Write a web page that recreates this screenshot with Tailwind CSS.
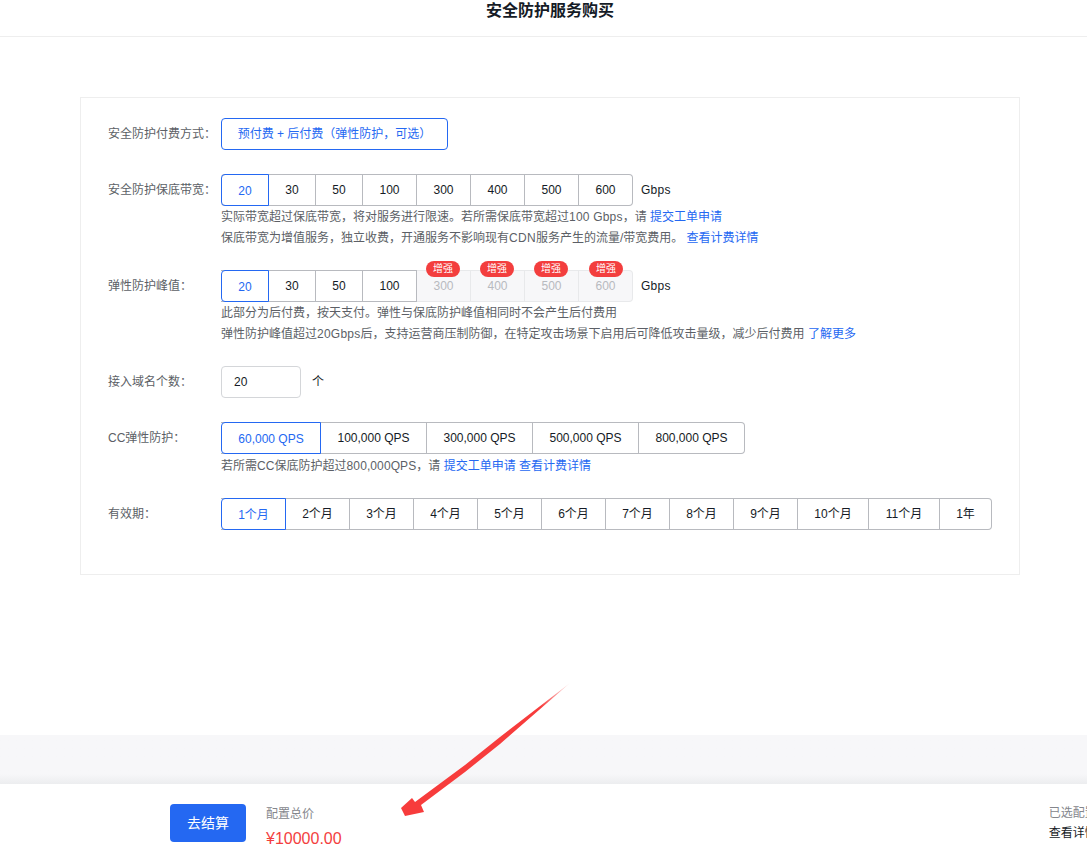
<!DOCTYPE html>
<html lang="zh">
<head>
<meta charset="utf-8">
<script src="https://cdn.jsdelivr.net/npm/@tailwindcss/browser@4"></script>
</head>
<body class="bg-white">
<div class="relative w-[1087px] h-[851px] overflow-hidden font-['Liberation_Sans','Noto_Sans_CJK_SC',sans-serif] text-xs text-[#151b26]">
  <div class="w-[1100px] h-[851px] flex flex-col">
    <header class="h-[37px] shrink-0 border-b border-[#eeeeee] text-center text-base font-bold leading-[22px]">安全防护服务购买</header>
    <main class="flex-1 pt-[60px]">
      <section class="w-[940px] mx-auto border border-[#eeeeee] pt-5 pb-[44px] pl-[27px]">
        <div class="flex mb-6">
          <div class="w-[113px] leading-[32px] text-[#5c5f66]">安全防护付费方式：</div>
          <div class="h-8 w-[227px] flex items-center justify-center rounded-[4px] border border-[#2468f2] text-[#2468f2]">预付费 + 后付费（弹性防护，可选）</div>
        </div>

        <div class="flex mb-[21px]">
          <div class="w-[113px] leading-[32px] text-[#5c5f66]">安全防护保底带宽：</div>
          <div>
            <div class="flex items-center">
              <div class="flex h-8 w-[412px] rounded-[4px] border-y border-r border-[#b8babf] text-center leading-[30px]">
                <div class="w-[48px] -my-px h-8 leading-[32px] rounded-l-[4px] border border-[#2468f2] text-[#2468f2]">20</div>
                <div class="w-[47px] border-r border-[#b8babf]">30</div>
                <div class="w-[47px] border-r border-[#b8babf]">50</div>
                <div class="w-[54px] border-r border-[#b8babf]">100</div>
                <div class="w-[54px] border-r border-[#b8babf]">300</div>
                <div class="w-[54px] border-r border-[#b8babf]">400</div>
                <div class="w-[54px] border-r border-[#b8babf]">500</div>
                <div class="flex-1">600</div>
              </div>
              <span class="ml-2 tracking-[.25px]">Gbps</span>
            </div>
            <p class="mt-px leading-[21px] text-[#5c5f66]">实际带宽超过保底带宽，将对服务进行限速。若所需保底带宽超过<span class="tracking-[.2px]">100 Gbps</span>，请 <a class="text-[#2468f2]">提交工单申请</a></p>
            <p class="leading-[21px] text-[#5c5f66]">保底带宽为增值服务，独立收费，开通服务不影响现有<span class="tracking-[.3px]">CDN</span>服务产生的流量/带宽费用。 <a class="text-[#2468f2]">查看计费详情</a></p>
          </div>
        </div>

        <div class="flex mb-[21px]">
          <div class="w-[113px] leading-[32px] text-[#5c5f66]">弹性防护峰值：</div>
          <div>
            <div class="flex items-center">
              <div class="flex h-8 w-[412px] text-center">
                <div class="flex h-8 w-[196px] border-y border-r border-[#b8babf] leading-[30px]">
                  <div class="w-[48px] -my-px h-8 leading-[32px] rounded-l-[4px] border border-[#2468f2] text-[#2468f2]">20</div>
                  <div class="w-[47px] border-r border-[#b8babf]">30</div>
                  <div class="w-[47px] border-r border-[#b8babf]">50</div>
                  <div class="flex-1">100</div>
                </div>
                <div class="flex flex-1 h-8 rounded-r-[4px] border-y border-r border-[#e8e9eb] bg-[#f7f7f9] text-[#b8babf] leading-[30px]">
                  <div class="relative w-[54px] border-r border-[#e8e9eb]">300<span class="absolute -top-[10px] left-[9px] w-[34px] h-4 rounded-full bg-[#f33e3e] text-white text-[10px] leading-4">增强</span></div>
                  <div class="relative w-[54px] border-r border-[#e8e9eb]">400<span class="absolute -top-[10px] left-[9px] w-[34px] h-4 rounded-full bg-[#f33e3e] text-white text-[10px] leading-4">增强</span></div>
                  <div class="relative w-[54px] border-r border-[#e8e9eb]">500<span class="absolute -top-[10px] left-[9px] w-[34px] h-4 rounded-full bg-[#f33e3e] text-white text-[10px] leading-4">增强</span></div>
                  <div class="relative flex-1">600<span class="absolute -top-[10px] left-[10px] w-[34px] h-4 rounded-full bg-[#f33e3e] text-white text-[10px] leading-4">增强</span></div>
                </div>
              </div>
              <span class="ml-2 tracking-[.25px]">Gbps</span>
            </div>
            <p class="mt-px leading-[21px] text-[#5c5f66]">此部分为后付费，按天支付。弹性与保底防护峰值相同时不会产生后付费用</p>
            <p class="leading-[21px] text-[#5c5f66]">弹性防护峰值超过<span class="tracking-[.25px]">20Gbps</span>后，支持运营商压制防御，在特定攻击场景下启用后可降低攻击量级，减少后付费用 <a class="text-[#2468f2]">了解更多</a></p>
          </div>
        </div>

        <div class="flex mb-6">
          <div class="w-[113px] leading-[32px] text-[#5c5f66]">接入域名个数：</div>
          <div class="flex items-center">
            <div class="w-20 h-8 pl-[12px] rounded-[4px] border border-[#d4d6d9] leading-[30px]">20</div>
            <span class="ml-[11px]">个</span>
          </div>
        </div>

        <div class="flex mb-[21px]">
          <div class="w-[113px] leading-[32px] text-[#5c5f66]">CC弹性防护：</div>
          <div>
            <div class="flex h-8 w-[524px] rounded-r-[4px] border-y border-r border-[#b8babf] text-center leading-[30px]">
              <div class="w-[100px] -my-px h-8 leading-[32px] rounded-l-[4px] border border-[#2468f2] text-[#2468f2]">60,000 QPS</div>
              <div class="w-[106px] border-r border-[#b8babf]">100,000 QPS</div>
              <div class="w-[106px] border-r border-[#b8babf]">300,000 QPS</div>
              <div class="w-[106px] border-r border-[#b8babf]">500,000 QPS</div>
              <div class="flex-1">800,000 QPS</div>
            </div>
            <p class="mt-[2px] leading-[21px] text-[#5c5f66]">若所需<span class="tracking-[.1px]">CC</span>保底防护超过<span class="tracking-[.1px]">800,000QPS</span>，请 <a class="text-[#2468f2]">提交工单申请</a> <a class="text-[#2468f2]">查看计费详情</a></p>
          </div>
        </div>

        <div class="flex">
          <div class="w-[113px] leading-[32px] text-[#5c5f66]">有效期：</div>
          <div class="flex h-8 w-[771px] rounded-r-[4px] border-y border-r border-[#b8babf] text-center leading-[30px]">
            <div class="w-[65px] -my-px h-8 leading-[32px] rounded-l-[4px] border border-[#2468f2] text-[#2468f2]">1个月</div>
            <div class="w-[64px] border-r border-[#b8babf]">2个月</div>
            <div class="w-[64px] border-r border-[#b8babf]">3个月</div>
            <div class="w-[64px] border-r border-[#b8babf]">4个月</div>
            <div class="w-[64px] border-r border-[#b8babf]">5个月</div>
            <div class="w-[64px] border-r border-[#b8babf]">6个月</div>
            <div class="w-[64px] border-r border-[#b8babf]">7个月</div>
            <div class="w-[64px] border-r border-[#b8babf]">8个月</div>
            <div class="w-[64px] border-r border-[#b8babf]">9个月</div>
            <div class="w-[71px] border-r border-[#b8babf]">10个月</div>
            <div class="w-[71px] border-r border-[#b8babf]">11个月</div>
            <div class="flex-1">1年</div>
          </div>
        </div>
      </section>
    </main>
    <div class="h-[49px] shrink-0 bg-gradient-to-b from-[#f7f7f9] from-[80%] to-[#ecedef]"></div>
    <footer class="h-[67px] shrink-0 flex items-start pl-[170px] pt-5 bg-white">
      <button class="w-[76px] h-[38px] rounded-[4px] bg-[#2468f2] text-white text-sm">去结算</button>
      <div class="ml-5">
        <div class="leading-5 text-[#84868c]">配置总价</div>
        <div class="mt-[5px] text-base leading-5 text-[#f33e3e]">¥10000.00</div>
      </div>
      <div class="ml-[707px] -mt-px whitespace-nowrap">
        <div class="leading-5 text-[#84868c]">已选配置</div>
        <div class="leading-5">查看详情</div>
      </div>
    </footer>
  </div>
  <svg class="absolute inset-0 pointer-events-none" width="1087" height="851" viewBox="0 0 1087 851">
    <defs>
      <linearGradient id="arrowFade" gradientUnits="userSpaceOnUse" x1="570" y1="683" x2="540" y2="706">
        <stop offset="0" stop-color="#f73c3c" stop-opacity="0.1"/>
        <stop offset="1" stop-color="#f73c3c"/>
      </linearGradient>
    </defs>
    <path d="M570 683 L500 737 L465 765 L415 802 L412 798 L401 808 L405 816 L424 812 L421 805 L465 772 L500 744 Z" fill="url(#arrowFade)"/>
  </svg>
</div>
</body>
</html>
